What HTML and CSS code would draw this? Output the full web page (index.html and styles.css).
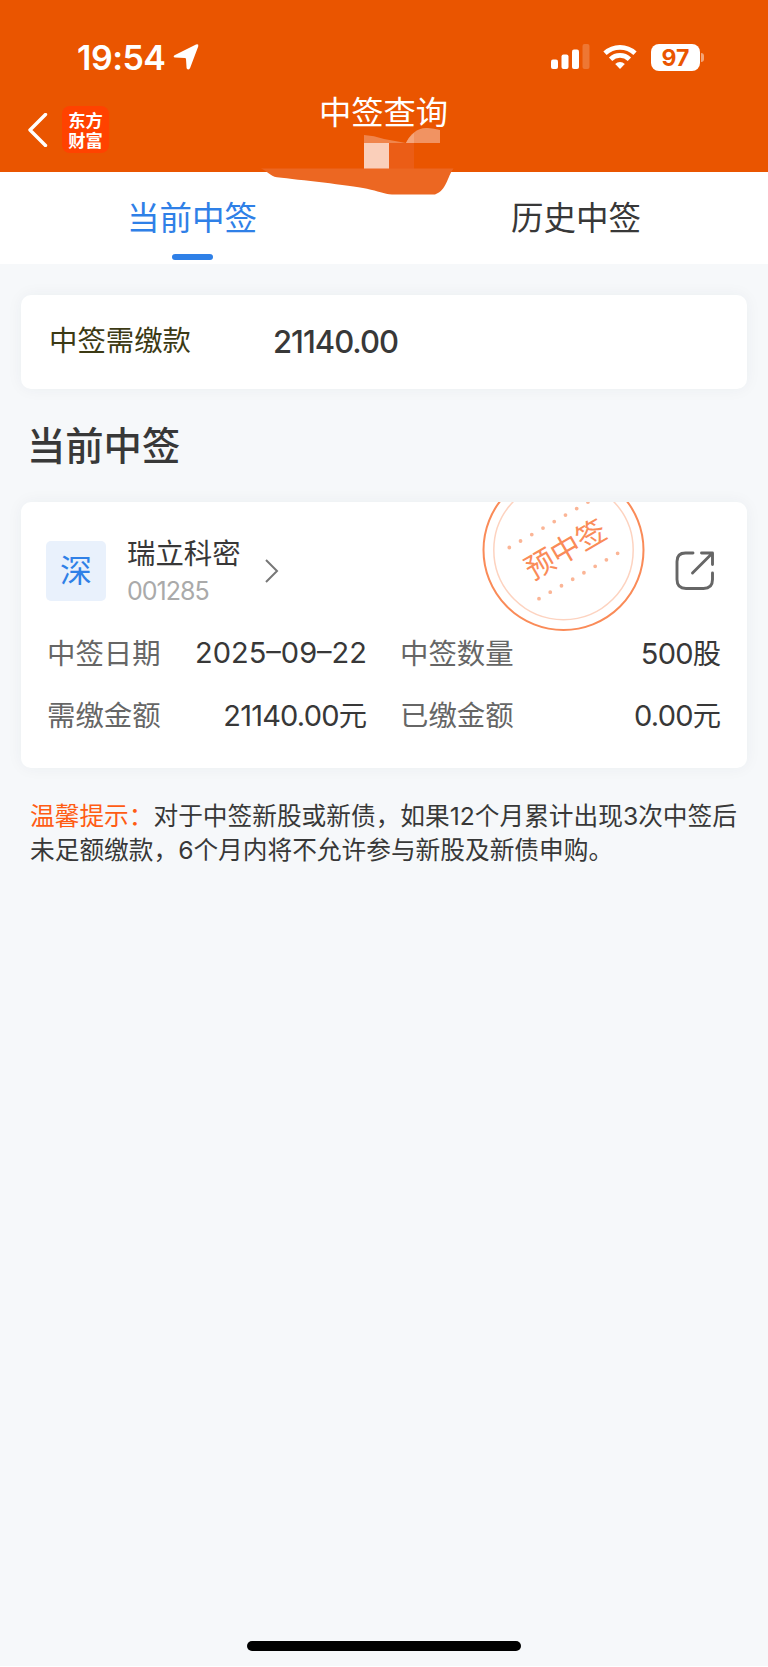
FILE: index.html
```html
<!doctype html>
<html lang="zh-CN">
<head>
<meta charset="utf-8">
<meta name="viewport" content="width=device-width, initial-scale=1">
<title>中签查询</title>
<link rel="stylesheet" href="styles.css">
</head>

<body>
<div class="page">
	<header class="header">
		<div class="status">
			<span class="time">19:54</span>
			<svg class="location" width="28" height="28" viewBox="0 0 28 28"><path d="M2.500 12.200 24 1.500q3-1 2.200 2L18 25.200q-1.800 2.400-3.400 0l-.6-9.200q-.1-1-1.100-1L3 14.600q-2.400-.8-.5-2.400z" fill="#fff"/></svg>
			<svg class="signal" width="40" height="26" viewBox="0 0 40 26" fill="#fff">
				<rect x="0" y="15.500" width="7" height="9.500" rx="2"/>
				<rect x="10.500" y="10.500" width="7" height="14.500" rx="2"/>
				<rect x="21" y="5.500" width="7" height="19.500" rx="2"/>
				<rect x="31.500" y="0" width="7" height="25" rx="2" opacity=".2"/>
			</svg>
			<svg class="wifi" width="34" height="26" viewBox="0 0 34 26" fill="none" stroke="#fff" stroke-width="4.800">
				<path d="M2 9.200a22 22 0 0 1 30 0"/>
				<path d="M7.600 15.200a13.600 13.600 0 0 1 18.800 0"/>
				<path d="M17 25l-4.800-5a7 7 0 0 1 9.600 0z" fill="#fff" stroke="none"/>
			</svg>
			<span class="battery">97</span>
			<i class="battery-cap"></i>
		</div>
		<div class="nav">
			<svg class="back" width="20" height="34" viewBox="0 0 20 34"><path d="M17.500 1.500 2 17l15.500 15.500" fill="none" stroke="#fff" stroke-width="3.400" stroke-linecap="round" stroke-linejoin="round"/></svg>
			<div class="logo">东方<br>财富</div>
			<h1>中签查询</h1>
		</div>
		<svg class="smudge" width="200" height="70" viewBox="260 126 200 70">
			<path d="M364 135q10 .5 20 4l22 4h-42z" fill="#f0854c"/>
			<path d="M406 143c4-9 12-16 22-15q6 .300 12 2v13z" fill="#f19362"/>
			<path d="M406 143q3-6 8-10v10z" fill="#f4a57b"/>
			<path d="M364 143h25v26h-25z" fill="#facfba"/>
			<path d="M389 143h25v26h-25z" fill="#eb5d16"/>
			<path d="M261 168.500H453.500C447 177 447 190 435 194.500H392C384 194 378 191 367 188.700 348 185 300 180 277 177.300 270 176 267 171 261 168.500z" fill="#ec6722"/>
		</svg>
	</header>

	<nav class="tabs">
		<a class="tab active">当前中签</a>
		<a class="tab">历史中签</a>
	</nav>

	<main class="content">
		<section class="card total">
			<span class="total-label">中签需缴款</span>
			<span class="total-value">21140.00</span>
		</section>

		<h2>当前中签</h2>

		<section class="card stock">
			<div class="stock-head">
				<span class="market">深</span>
				<div class="stock-name">
					<b>瑞立科密</b>
					<span>001285</span>
				</div>
				<svg class="arrow" width="16" height="26" viewBox="0 0 16 26"><path d="m2 2 11 11L2 24" fill="none" stroke="#777" stroke-width="2"/></svg>
				<svg class="share" width="40" height="40" viewBox="0 0 40 40" fill="none" stroke="#666" stroke-width="2.900" stroke-linecap="round" stroke-linejoin="round">
					<path d="M18 2h-7.500q-8.500 0-8.500 8.500v18q0 9 9 9h17.500q9 0 9-9v-6.500"/>
					<path d="M26.500 2h11v11.500M37 2.500 17.500 22"/>
				</svg>
			</div>
			<div class="rows">
				<span class="label">中签日期</span><span class="value date">2025–09–22</span>
				<span class="label second">中签数量</span><span class="value">500<em>股</em></span>
				<span class="label">需缴金额</span><span class="value">21140.00<em>元</em></span>
				<span class="label second">已缴金额</span><span class="value">0.00<em>元</em></span>
			</div>
			<svg class="stamp" width="164" height="130" viewBox="482 502 164 130" fill="none">
				<circle cx="563.500" cy="550" r="80" stroke="#fa8b58" stroke-width="2"/>
				<circle cx="563.500" cy="550" r="69.700" stroke="#fdd3c0" stroke-width="1.500"/>
				<g stroke="#fbb596" stroke-width="3.800" stroke-linecap="round" stroke-dasharray="0 12.970">
					<path d="M509.300 547.500l79-45.600"/>
					<path d="M539 598.700l79-45.600"/>
				</g>
				<text x="565.500" y="560" text-anchor="middle" transform="rotate(-30 565.500 549.500)">预中签</text>
			</svg>
		</section>

		<p class="tip"><span>温馨提示：</span>对于中签新股或新债，如果12个月累计出现3次中签后<br>未足额缴款，6个月内将不允许参与新股及新债申购。</p>
	</main>

	<div class="home-bar"></div>
</div>
</body>
</html>
```
FILE: styles.css
```css
*{
	box-sizing:border-box;
	}
body{
	margin:0;
	background-color:#fff;
	font-family:Inter, "Noto Sans CJK SC", sans-serif;
	color:#383838;
	}
.page{
	display:flex;
	flex-direction:column;
	height:1666px;
	background-color:#f6f8fa;
	}
.header{
	position:relative;
	height:172px;
	background-color:#ea5500;
	color:#fff;
	}
.status{
	display:flex;
	align-items:center;
	height:114px;
	padding:0 64px 0 77px;
	}
.time{
	font-size:34px;
	font-weight:600;
	letter-spacing:-.5px;
	}
.location{
	margin-left:6px;
	}
.signal{
	margin-left:auto;
	}
.wifi{
	margin-left:12px;
	}
.battery{
	width:49px;
	height:27px;
	margin-left:14px;
	border-radius:8px;
	background-color:#fff;
	color:#ea5500;
	font-size:23px;
	font-weight:700;
	line-height:28px;
	text-align:center;
	}
.battery-cap{
	width:3px;
	height:9px;
	margin-left:1px;
	border-radius:0 4px 4px 0;
	background-color:#f3a477;
	}
.nav{
	display:grid;
	grid-template-columns:20px 47px 1fr 110px;
	column-gap:14px;
	height:58px;
	margin-top:-8px;
	padding-left:28px;
	}
.back{
	margin-top:6.5px;
	}
.logo{
	width:47px;
	height:47px;
	padding-top:4px;
	border-radius:8px;
	background-color:#ff4200;
	font-family:"Noto Sans CJK SC", sans-serif;
	font-size:17.3px;
	font-weight:700;
	line-height:19.5px;
	text-align:center;
	}
.nav h1{
	margin:-16px 0 0;
	font-size:32.3px;
	font-weight:400;
	line-height:46px;
	text-align:center;
	}
.smudge{
	position:absolute;
	left:260px;
	top:126px;
	}
.tabs{
	display:flex;
	height:92px;
	background-color:#fff;
	}
.tab{
	display:flex;
	flex:1;
	flex-direction:column;
	align-items:center;
	padding-top:23px;
	font-size:32.5px;
	line-height:48px;
	}
.active{
	color:#2f80e7;
	}
.active:after{
	content:"";
	width:41px;
	height:6px;
	margin-top:11px;
	border-radius:3px;
	background-color:#2f80e7;
	}
.content{
	flex:1;
	padding:30.5px 21px 0;
	}
.card{
	border-radius:10px;
	background-color:#fff;
	box-shadow:0 0 16px rgba(40,60,80,.05);
	}
.total{
	display:flex;
	align-items:center;
	height:94px;
	padding-left:28px;
	}
.total-label{
	width:224px;
	padding-bottom:6px;
	color:#3c3a14;
	font-size:28.4px;
	}
.total-value{
	padding-bottom:1px;
	font-size:31px;
	font-weight:500;
	letter-spacing:-1px;
	}
h2{
	margin:29px 0 27.5px 6px;
	font-size:38.3px;
	font-weight:500;
	line-height:57px;
	}
.stock{
	position:relative;
	height:265.5px;
	padding:39px 26px 0 25px;
	}
.stock-head{
	display:flex;
	align-items:center;
	height:60px;
	}
.market{
	width:60px;
	height:60px;
	border-radius:5px;
	background-color:#e9f1fc;
	color:#2f80e7;
	font-size:32px;
	line-height:60px;
	text-align:center;
	}
.stock-name{
	display:flex;
	flex-direction:column;
	width:135px;
	margin-left:21px;
	padding-top:2px;
	}
.stock-name b{
	font-size:28.4px;
	font-weight:400;
	line-height:38px;
	}
.stock-name span{
	color:#aaa;
	font-size:25px;
	letter-spacing:-1px;
	line-height:36px;
	}
.arrow{
	margin-left:2px;
	}
.share{
	margin-left:auto;
	margin-right:6px;
	}
.rows{
	display:grid;
	grid-template-columns:130px 190px 146px 1fr;
	grid-auto-rows:62px;
	align-items:center;
	margin-top:19px;
	padding-left:1px;
	}
.label{
	color:#666;
	font-size:28.4px;
	white-space:nowrap;
	}
.second{
	padding-left:33px;
	}
.value{
	font-size:29px;
	letter-spacing:-.8px;
	text-align:right;
	white-space:nowrap;
	}
.date{
	padding-top:3px;
	letter-spacing:0;
	}
.value em{
	font-size:28.3px;
	font-style:normal;
	letter-spacing:0;
	}
.stamp{
	position:absolute;
	left:461px;
	top:0;
	}
.stamp text{
	fill:#fa8b58;
	font-size:29.5px;
	}
.tip{
	margin:31px 0 0 9px;
	font-size:24.7px;
	line-height:34px;
	white-space:nowrap;
	}
.tip span{
	color:#ff5c14;
	}
.home-bar{
	width:274px;
	height:10px;
	margin:0 auto 15px;
	border-radius:5px;
	background-color:#000;
	}
```
